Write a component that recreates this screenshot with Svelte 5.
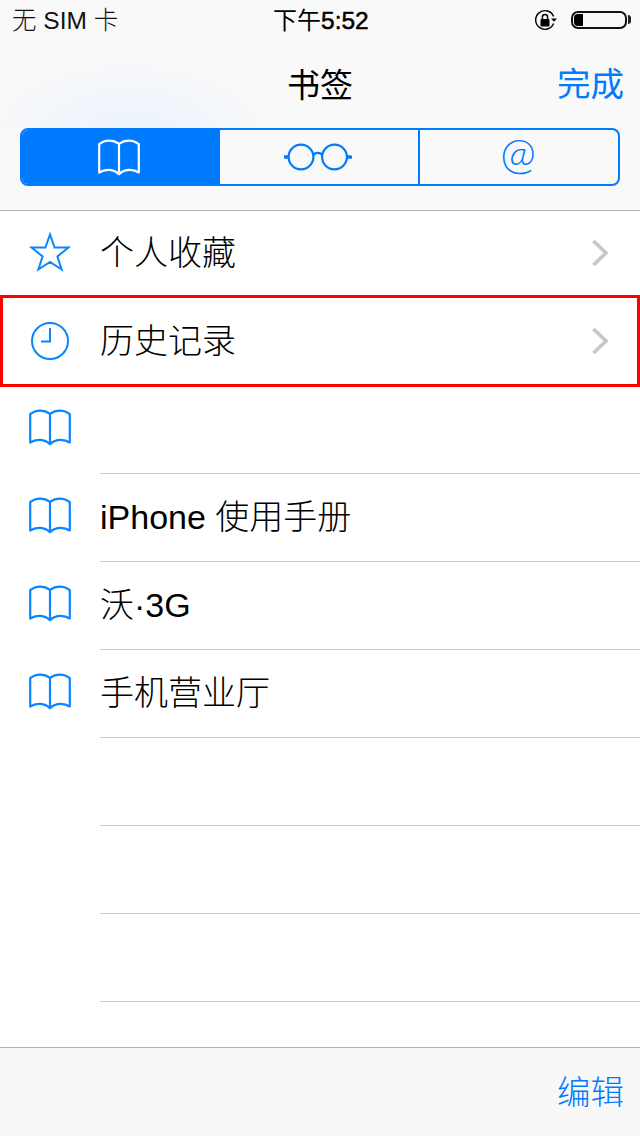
<script>
  const rows = [
    { icon: 'star', label: '个人收藏', chevron: true },
    { icon: 'clock', label: '历史记录', chevron: true, selected: true },
    { icon: 'book', label: '' },
    { icon: 'book', label: 'iPhone 使用手册' },
    { icon: 'book', label: '沃·3G' },
    { icon: 'book', label: '手机营业厅' },
    { label: '' },
    { label: '' },
    { label: '' }
  ];
  const bookPath = 'M1.2 33.5V5.2C7 .4 15 .6 21 4.8C27 .6 35 .4 40.8 5.2V33.5C35 29.5 26 29.8 21 35.2C16 29.8 7 29.5 1.2 33.5ZM21 4.8V35.2';
</script>

<div class="page">
  <header class="top">
    <div class="tint">
      <div class="status">
        <span class="carrier">无 SIM 卡</span>
        <span class="time">下午<b>5:52</b></span>
        <span class="indicators">
          <svg class="lock" width="24" height="24" viewBox="0 0 24 24" aria-hidden="true">
            <path d="M19.6 8.5A9.3 9.3 0 1 0 19.6 15.5" fill="none" stroke="#000" stroke-width="1.4" />
            <path d="M17 10.5h6l-3 3.2z" fill="#000" />
            <rect x="6.5" y="11" width="9" height="7.5" rx="1" fill="#000" />
            <path d="M8.4 11.5V9.2a2.6 2.6 0 0 1 5.2 0v2.3" fill="none" stroke="#000" stroke-width="1.5" />
          </svg>
          <span class="battery"><span class="level"></span></span>
          <span class="tip"></span>
        </span>
      </div>
      <nav class="nav">
        <h1>书签</h1>
        <span class="done">完成</span>
      </nav>
    </div>
    <div class="segments">
      <div class="seg on">
        <svg width="42" height="37" viewBox="0 0 42 37" aria-hidden="true">
          <path d={bookPath} fill="none" stroke="#fff" stroke-width="2.2" stroke-linejoin="round" />
        </svg>
      </div>
      <div class="seg glasses">
        <svg width="68" height="28" viewBox="0 0 68 28" aria-hidden="true">
          <g fill="none" stroke="#007aff" stroke-width="2.2">
            <circle cx="17" cy="14" r="12.4" />
            <circle cx="50.5" cy="14" r="12.4" />
            <path d="M29 12.5C31 9 36.5 9 38.5 12.5" />
          </g>
          <path d="M.8 14H3.6M63.8 14H66.6" fill="none" stroke="#007aff" stroke-width="3.4" stroke-linecap="round" />
        </svg>
      </div>
      <div class="seg at">@</div>
    </div>
  </header>

  <main class="list">
    {#each rows as row}
      <div class="row" class:selected={row.selected}>
        <div class="icon" class:star={row.icon === 'star'}>
          {#if row.icon === 'star'}
            <svg width="42" height="40" viewBox="0 0 42 40" aria-hidden="true">
              <path d="M21 2.5L25.6 15.5H39.6L28.4 24.4L32.6 37.5L21 30L9.4 37.5L13.6 24.4L2.4 15.5H16.4Z" fill="none" stroke="#0a84ff" stroke-width="2" stroke-linejoin="miter" />
            </svg>
          {:else if row.icon === 'clock'}
            <svg width="40" height="40" viewBox="0 0 40 40" aria-hidden="true">
              <circle cx="20" cy="20" r="18" fill="none" stroke="#0a84ff" stroke-width="2" />
              <path d="M20 7V20.5H11" fill="none" stroke="#0a84ff" stroke-width="2" />
            </svg>
          {:else if row.icon === 'book'}
            <svg width="42" height="37" viewBox="0 0 42 37" aria-hidden="true">
              <path d={bookPath} fill="none" stroke="#0a84ff" stroke-width="2.2" stroke-linejoin="round" />
            </svg>
          {/if}
        </div>
        <div class="body">
          <span class="label">{row.label}</span>
          {#if row.chevron}
            <svg class="chev" width="18" height="28" viewBox="0 0 18 28" aria-hidden="true">
              <path d="M2.5 2L15 14L2.5 26" fill="none" stroke="#c7c7cc" stroke-width="3.8" />
            </svg>
          {/if}
        </div>
        {#if row.selected}<div class="highlight"></div>{/if}
      </div>
    {/each}
  </main>

  <footer class="bottom"><span class="edit">编辑</span></footer>
</div>

<style>
  :global(body) {
    margin: 0;
    background: #fff;
  }
  .page {
    width: 640px;
    height: 1136px;
    display: flex;
    flex-direction: column;
    overflow: hidden;
    font-family: "Liberation Sans", "Noto Sans CJK SC", sans-serif;
    font-weight: 300;
    color: #000;
  }
  .top {
    flex: none;
    height: 210px;
    box-sizing: content-box;
    background: #f9f9f9;
    border-bottom: 1px solid #b2b2b2;
  }
  .tint {
    height: 128px;
    background: radial-gradient(ellipse 150px 75px at 130px 132px, #edf4fd 0%, #f1f5fb 45%, #f9f9f9 100%);
  }
  .status {
    height: 40px;
    position: relative;
    display: flex;
    align-items: center;
    justify-content: space-between;
    padding: 2px 9px 0 12px;
    box-sizing: border-box;
    font-size: 24px;
    line-height: 38px;
  }
  .carrier {
    color: #111;
    font-size: 24.5px;
  }
  .time {
    position: absolute;
    left: 273px;
    top: 2px;
    font-weight: 400;
  }
  .time b {
    font-weight: 400;
    font-size: 24.5px;
    -webkit-text-stroke: 0.5px #000;
  }
  .indicators {
    display: flex;
    align-items: center;
    margin-top: -3px;
  }
  .lock { margin-right: 13px; }
  .battery {
    width: 56px;
    height: 18px;
    box-sizing: border-box;
    border: 2px solid #111;
    border-radius: 7px;
    padding: 1px;
    display: flex;
  }
  .level {
    width: 9px;
    background: #000;
    border-radius: 4px 0 0 4px;
  }
  .tip {
    width: 3px;
    height: 9px;
    background: #222;
    border-radius: 0 3px 3px 0;
    margin-left: 1px;
  }
  .nav {
    height: 88px;
    position: relative;
    display: flex;
    justify-content: flex-end;
    padding-right: 16px;
    box-sizing: border-box;
  }
  h1 {
    position: absolute;
    left: 0;
    right: 0;
    top: 2px;
    margin: 0;
    text-align: center;
    font-size: 33px;
    font-weight: 400;
    line-height: 88px;
  }
  .done {
    font-size: 33.5px;
    color: #007aff;
    line-height: 88px;
    padding-top: 1px;
    font-weight: 400;
  }
  .segments {
    margin: 0 20px;
    height: 58px;
    box-sizing: border-box;
    border: 2px solid #007aff;
    border-radius: 8px;
    display: grid;
    grid-template-columns: 198px 200px 198px;
    grid-template-rows: 54px;
    overflow: hidden;
  }
  .seg {
    display: flex;
    align-items: center;
    justify-content: center;
    box-sizing: border-box;
    min-height: 0;
  }
  .seg.on {
    background: #007aff;
    padding-right: 4px;
  }
  .seg.glasses {
    border-right: 2px solid #007aff;
    padding-right: 3px;
    padding-bottom: 1px;
  }
  .at {
    color: #007aff;
    font-family: Lato, "Liberation Sans", sans-serif;
    font-size: 43px;
    font-weight: 300;
    line-height: 46px;
    padding: 0 2px 8px 0;
  }
  .list {
    flex: 1;
    min-height: 0;
    background: #fff;
  }
  .row {
    position: relative;
    height: 88px;
    display: flex;
  }
  .row:first-child { height: 87px; }
  .icon {
    flex: none;
    width: 100px;
    display: flex;
    align-items: center;
    justify-content: center;
    padding-bottom: 6px;
    box-sizing: border-box;
  }
  .row:nth-child(-n+2) .icon { padding-bottom: 2px; }
  .row .icon.star { padding-bottom: 6px; }
  .body {
    flex: 1;
    display: flex;
    align-items: center;
    justify-content: space-between;
    border-bottom: 1px solid #c8c7cc;
    padding-right: 31px;
    font-size: 34px;
    line-height: 40px;
  }
  .label { margin-bottom: 2px; }
  .chev { margin-bottom: 2px; }
  .highlight {
    position: absolute;
    left: 0;
    right: 0;
    top: -3px;
    bottom: -1px;
    border: 3px solid #f00;
  }
  .bottom {
    flex: none;
    height: 88px;
    background: #f8f8f8;
    border-top: 1px solid #b2b2b2;
    display: flex;
    justify-content: flex-end;
    padding-right: 16px;
  }
  .edit {
    font-size: 33.5px;
    color: #007aff;
    line-height: 88px;
    padding-top: 1px;
  }
</style>
